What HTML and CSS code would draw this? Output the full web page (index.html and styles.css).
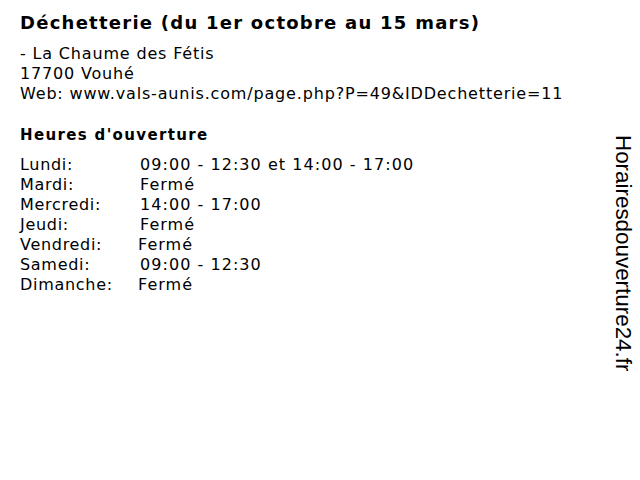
FILE: index.html
```html
<!DOCTYPE html>
<html lang="fr">
<head>
<meta charset="utf-8">
<link rel="stylesheet" href="styles.css">
</head>
<body>
<div class="page">
  <main class="content">
    <h1 class="title">Déchetterie (du 1er octobre au 15 mars)</h1>
    <div class="address">
      <div>- La Chaume des Fétis</div>
      <div>17700 Vouhé</div>
      <div>Web: www.vals-aunis.com/page.php?P=49&amp;IDDechetterie=11</div>
    </div>
    <h2 class="subtitle">Heures d'ouverture</h2>
    <div class="hours">
      <span class="day">Lundi:</span><span class="time">09:00 - 12:30 et 14:00 - 17:00</span>
      <span class="day">Mardi:</span><span class="time">Fermé</span>
      <span class="day">Mercredi:</span><span class="time">14:00 - 17:00</span>
      <span class="day">Jeudi:</span><span class="time">Fermé</span>
      <span class="day">Vendredi:</span><span class="time shift">Fermé</span>
      <span class="day">Samedi:</span><span class="time">09:00 - 12:30</span>
      <span class="day">Dimanche:</span><span class="time shift">Fermé</span>
    </div>
  </main>
  <aside class="brand">Horairesdouverture24.fr</aside>
</div>
</body>
</html>
```
FILE: styles.css
```css
html, body {
  margin: 0;
  padding: 0;
  background: #fff;
}
.page {
  width: 640px;
  height: 480px;
  display: flex;
  color: #000;
  font-family: "DejaVu Sans", Verdana, sans-serif;
}
.content {
  flex: 1;
  padding: 10px 0 0 20px;
}
.title {
  margin: 0;
  font-size: 18px;
  font-weight: bold;
  letter-spacing: 1.25px;
  line-height: 26px;
}
.address {
  margin-top: 8px;
  font-size: 16px;
  letter-spacing: 0.83px;
  line-height: 20px;
}
.subtitle {
  margin: 21px 0 0;
  font-size: 15px;
  font-weight: bold;
  letter-spacing: 1.35px;
  line-height: 20px;
}
.hours {
  margin-top: 10px;
  display: grid;
  grid-template-columns: 120px auto;
  font-size: 16px;
  line-height: 20px;
}
.day {
  letter-spacing: 0.7px;
}
.time {
  letter-spacing: 1.05px;
}
.time.shift {
  margin-left: -2px;
}
.brand {
  width: 40px;
  box-sizing: border-box;
  padding: 135px 0 0 0;
  writing-mode: vertical-rl;
  font-family: "Liberation Sans", Arial, sans-serif;
  font-size: 22.4px;
  line-height: 34px;
}
```
